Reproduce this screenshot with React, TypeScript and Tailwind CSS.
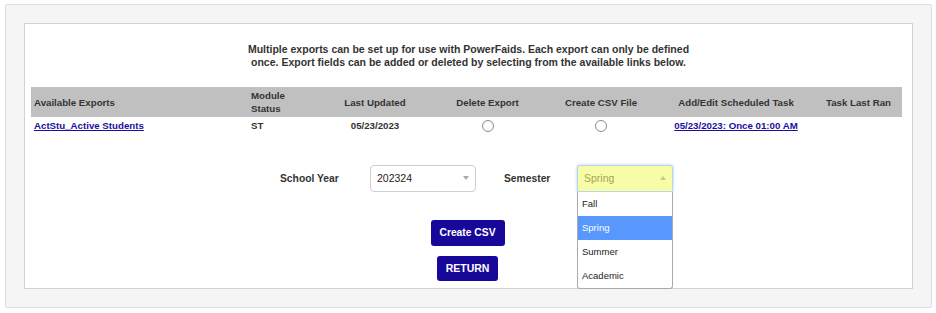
import React from "react";

const headers = [
  { label: "Available Exports", w: "w-[217px]", align: "text-left pl-[3px]" },
  { label: "Module Status", w: "w-[72px]", align: "text-left pl-[3px]" },
  { label: "Last Updated", w: "w-[110px]", align: "text-center" },
  { label: "Delete Export", w: "w-[115px]", align: "text-center" },
  { label: "Create CSV File", w: "w-[112px]", align: "text-center" },
  { label: "Add/Edit Scheduled Task", w: "w-[158px]", align: "text-center" },
  { label: "Task Last Ran", w: "w-[87px]", align: "text-center" },
];

const semesters = ["Fall", "Spring", "Summer", "Academic"];

const Radio: React.FC = () => (
  <span className="inline-block w-[12px] h-[12px] rounded-full border border-[#8a8a8a] bg-white" />
);

const App: React.FC = () => {
  return (
    <div className="w-[936px] h-[313px] bg-white font-['Liberation_Sans',Arial,sans-serif] pt-[4px] pl-[5px]">
      <div className="w-[927px] h-[304px] bg-[#f5f5f5] border border-[#dcdcdc] rounded-[2px] p-[18px]">
        <div className="relative w-[889px] h-[266px] bg-white border border-[#d2d2d2]">
          {/* intro text */}
          <p className="pt-[19px] text-center text-[10.5px] leading-[13px] font-bold text-[#333]">
            Multiple exports can be set up for use with PowerFaids. Each export can only be defined
            <br />
            once. Export fields can be added or deleted by selecting from the available links below.
          </p>

          {/* exports table */}
          <table className="mt-[18px] ml-[6px] w-[871px] border-collapse text-[9.7px] text-[#333]">
            <thead>
              <tr className="bg-[#c0c0c0] h-[30px]">
                {headers.map((h) => (
                  <th key={h.label} className={`${h.w} ${h.align} font-bold leading-[13px] align-middle`}>
                    {h.label === "Module Status" ? (
                      <>
                        Module
                        <br />
                        Status
                      </>
                    ) : (
                      h.label
                    )}
                  </th>
                ))}
              </tr>
            </thead>
            <tbody>
              <tr className="h-[18px]">
                <td className="pl-[3px] font-bold">
                  <a href="#" className="text-[#1a0ea0] underline">
                    ActStu_Active Students
                  </a>
                </td>
                <td className="pl-[3px] font-bold">ST</td>
                <td className="text-center font-bold">05/23/2023</td>
                <td className="text-center leading-[0]">
                  <Radio />
                </td>
                <td className="text-center leading-[0]">
                  <Radio />
                </td>
                <td className="text-center font-bold">
                  <a href="#" className="text-[#1a0ea0] underline">
                    05/23/2023: Once 01:00 AM
                  </a>
                </td>
                <td />
              </tr>
            </tbody>
          </table>

          {/* filters */}
          <div className="mt-[30px] flex items-center h-[27px]">
            <span className="ml-[255px] w-[90px] text-[10.3px] font-bold text-[#333]">School Year</span>
            <div className="flex items-start justify-between w-[106px] h-[27px] border border-[#cfcfcf] rounded-[4px] px-[6px] pt-[5px]">
              <span className="text-[10.5px] text-[#222] leading-[14px]">202324</span>
              <span className="mt-[5px] w-0 h-0 border-l-[3.5px] border-r-[3.5px] border-t-[4px] border-l-transparent border-r-transparent border-t-[#a8a8a8]" />
            </div>
            <span className="ml-[28px] w-[73px] text-[10.3px] font-bold text-[#333]">Semester</span>
            <div className="relative">
              <div className="flex items-start justify-between w-[96px] h-[27px] border border-[#b9d4ee] shadow-[0_0_3px_#a9cdf0] rounded-t-[3px] bg-[#f7fca6] px-[6px] pt-[5px]">
                <span className="text-[10.5px] text-[#a6a356] leading-[14px]">Spring</span>
                <span className="mt-[5px] w-0 h-0 border-l-[3.5px] border-r-[3.5px] border-b-[4px] border-l-transparent border-r-transparent border-b-[#c9c98a]" />
              </div>
              <ul className="absolute left-0 top-[27px] w-[96px] bg-white border border-[#aaa] border-t-0 rounded-b-[3px] text-[9.5px] text-[#222] z-10">
                {semesters.map((s) => (
                  <li
                    key={s}
                    className={`h-[24px] flex items-center px-[4px] ${
                      s === "Spring" ? "bg-[#5897fb] text-white" : ""
                    }`}
                  >
                    {s}
                  </li>
                ))}
              </ul>
            </div>
          </div>

          {/* actions */}
          <div className="mt-[28px] flex flex-col items-center gap-[10px]">
            <button className="ml-[-2px] w-[74px] h-[26px] rounded-[3px] bg-[#18089a] text-white text-[10.3px] font-bold">
              Create CSV
            </button>
            <button className="ml-[-2px] w-[61px] h-[25px] rounded-[3px] bg-[#18089a] text-white text-[10.5px] font-bold">
              RETURN
            </button>
          </div>
        </div>
      </div>
    </div>
  );
};

export default App;
